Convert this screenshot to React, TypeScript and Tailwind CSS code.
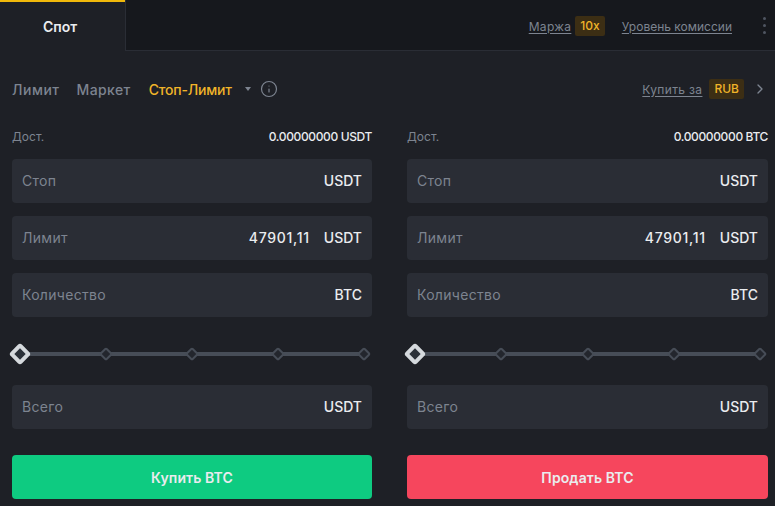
import { ChevronRight, Info } from "lucide-react";

const FONT = "font-['Inter','Noto_Sans',sans-serif]";

function Field({ label, value, unit }: { label: string; value?: string; unit: string }) {
  return (
    <div className="flex h-[44px] items-center justify-between rounded-[4px] bg-[#2a2d35] px-[10px] pb-[1px]">
      <span className="text-[14px] tracking-[0.3px] text-[#7d8490]">{label}</span>
      <div className="flex items-center gap-[14px] text-[14px] font-medium text-[#eaecef]">
        {value && <span className="tracking-[0.7px]">{value}</span>}
        <span>{unit}</span>
      </div>
    </div>
  );
}

function Slider() {
  return (
    <div className="relative flex h-[16px] items-center justify-between pr-[3px]">
      <div className="absolute left-[8px] right-[8px] top-[6px] h-[4px] bg-[#474d57]" />
      <div className="relative mr-[-3px] size-[16px] rotate-45 rounded-[3px] border-[4px] border-[#d5d9dd] bg-[#2b3139]" />
      {[0, 1, 2, 3].map((i) => (
        <div key={i} className="relative size-[10px] rotate-45 rounded-[2px] border-2 border-[#474d57] bg-[#23262d]" />
      ))}
    </div>
  );
}

function OrderForm({ side, buttonClass, available, widthClass }: { side: string; buttonClass: string; available: string; widthClass: string }) {
  return (
    <div className={`flex min-w-0 flex-col ${widthClass}`}>
      <div className="flex h-[18px] items-center justify-between text-[12px]">
        <span className="text-[#7d8490]">Дост.</span>
        <span className="font-medium tracking-[-0.36px] text-[#eaecef]">{available}</span>
      </div>
      <div className="mt-[13px] flex flex-col gap-[13px]">
        <Field label="Стоп" unit="USDT" />
        <Field label="Лимит" value="47901,11" unit="USDT" />
        <Field label="Количество" unit="BTC" />
      </div>
      <div className="mt-[29px]">
        <Slider />
      </div>
      <div className="mt-[23px]">
        <Field label="Всего" unit="USDT" />
      </div>
      <button className={`mt-[26px] h-[44px] rounded-[4px] text-[14px] font-semibold tracking-[0.1px] text-[#eaecef] ${buttonClass}`}>
        {side} BTC
      </button>
    </div>
  );
}

export default function App() {
  return (
    <div className={`flex h-[506px] w-[775px] flex-col overflow-hidden bg-[#1e2026] ${FONT}`}>
      {/* Header */}
      <div className="flex h-[51px] shrink-0 bg-[#16181d]">
        <div className="flex w-[125px] items-center justify-center border-t-2 border-[#f0b90b] bg-[#1e2026] pr-[5px] text-[14px] font-semibold text-[#eaecef]">
          Спот
        </div>
        <div className="flex flex-1 items-center justify-end border-b border-l border-[#2a2d35] pr-[9px] text-[12px] text-[#7d8490]">
          <span className="mt-[3px] tracking-[0.3px] underline underline-offset-2">Маржа</span>
          <span className="ml-[4px] mt-[1px] rounded-[2px] bg-[#3c2e14] px-[5px] py-[1px] font-medium text-[#f0b429]">10x</span>
          <span className="ml-[17px] mt-[3px] underline underline-offset-2">Уровень комиссии</span>
          <div className="ml-[31px] flex flex-col gap-[4px]">
            <span className="size-[3px] rounded-full bg-[#4f5561]" />
            <span className="size-[3px] rounded-full bg-[#4f5561]" />
            <span className="size-[3px] rounded-full bg-[#4f5561]" />
          </div>
        </div>
      </div>

      {/* Order type tabs */}
      <div className="mt-[27px] flex h-[22px] items-center px-[12px]">
        <span className="text-[14px] font-medium tracking-[0.5px] text-[#7d8490]">Лимит</span>
        <span className="ml-[17px] text-[14px] font-medium tracking-[0.4px] text-[#7d8490]">Маркет</span>
        <span className="ml-[18px] text-[14px] font-medium tracking-[-0.2px] text-[#f0b429]">Стоп-Лимит</span>
        <span className="ml-[13px] size-0 border-x-[3.5px] border-t-[4px] border-x-transparent border-t-[#7d8490]" />
        <Info className="ml-[9px] size-[18px] text-[#7d8490]" strokeWidth={1.6} />
        <div className="ml-auto flex items-center text-[12px] text-[#7d8490]">
          <span className="mt-[1px] tracking-[0.35px] underline underline-offset-2">Купить за</span>
          <span className="ml-[7px] rounded-[2px] bg-[#3c2e14] px-[5px] py-[1px] font-medium text-[#f0b429]">RUB</span>
          <ChevronRight className="ml-[8px] mr-[-5px] size-[16px]" />
        </div>
      </div>

      {/* Buy / sell */}
      <div className="mt-[28px] flex gap-[35px] pl-[12px]">
        <OrderForm side="Купить" buttonClass="bg-[#0ecb81]" available="0.00000000 USDT" widthClass="w-[360px]" />
        <OrderForm side="Продать" buttonClass="bg-[#f6465d]" available="0.00000000 BTC" widthClass="w-[361px]" />
      </div>
    </div>
  );
}
